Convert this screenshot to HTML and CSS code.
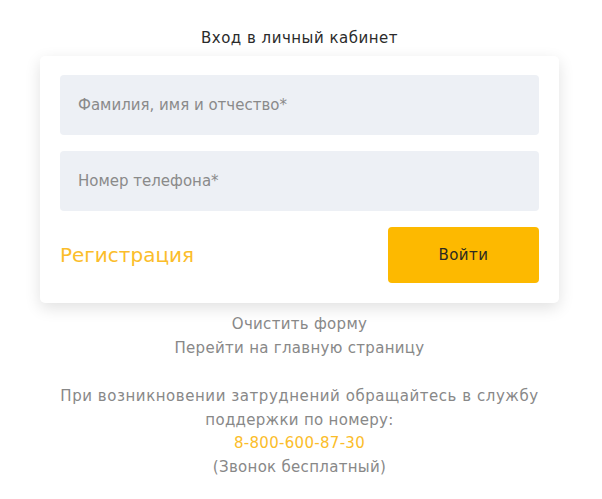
FILE: index.html
```html
<!DOCTYPE html>
<html lang="ru">
<head>
<meta charset="utf-8">
<title>Вход в личный кабинет</title>
<link rel="stylesheet" href="styles.css">
</head>
<body>
<main class="page">
  <h1 class="title">Вход в личный кабинет</h1>
  <form class="card">
    <input class="field" type="text" placeholder="Фамилия, имя и отчество*">
    <input class="field" type="tel" placeholder="Номер телефона*">
    <div class="actions">
      <a class="register" href="#">Регистрация</a>
      <button class="login" type="button">Войти</button>
    </div>
  </form>
  <nav class="links">
    <a href="#">Очистить форму</a>
    <a href="#">Перейти на главную страницу</a>
  </nav>
  <p class="support"><span class="wide">При возникновении затруднений обращайтесь в службу</span><br>поддержки по номеру:<br><a class="phone" href="#">8-800-600-87-30</a><br>(Звонок бесплатный)</p>
</main>
</body>
</html>
```
FILE: styles.css
```css
* { box-sizing: border-box; }
html, body { margin: 0; padding: 0; background: #fff; }
body { font-family: "DejaVu Sans", "Noto Sans", sans-serif; }
.page {
  width: 519px;
  margin: 0 0 0 40px;
  padding-top: 28px;
  display: flex;
  flex-direction: column;
  align-items: stretch;
}
.title {
  margin: 0 0 8px;
  font-size: 15px;
  font-weight: 500;
  letter-spacing: 0.5px;
  line-height: 20px;
  color: #2b2b2b;
  text-align: center;
}
.card {
  background: #fff;
  border-radius: 5px;
  box-shadow: 0 5px 16px rgba(0,0,0,0.12);
  padding: 19px 20px 20px;
  display: flex;
  flex-direction: column;
  gap: 16px;
}
.field {
  height: 60px;
  border: none;
  border-radius: 4px;
  background: #edf0f5;
  padding: 0 18px;
  font: inherit;
  font-size: 15px;
  color: #333;
  outline: none;
}
.field::placeholder { color: #8a8a8a; }
.actions {
  display: flex;
  align-items: center;
  justify-content: space-between;
}
.register {
  color: #fbbd2a;
  font-size: 20px;
  text-decoration: none;
}
.login {
  width: 151px;
  height: 56px;
  border: none;
  border-radius: 4px;
  background: #fdb900;
  font: inherit;
  font-size: 15px;
  letter-spacing: 0.5px;
  font-weight: 500;
  color: #2d2a20;
  cursor: pointer;
}
.links {
  margin-top: 9px;
  display: flex;
  flex-direction: column;
  align-items: center;
}
.links a, .support {
  font-size: 15px;
  letter-spacing: 0.3px;
  line-height: 24px;
  color: #888;
  text-decoration: none;
}
.support {
  margin: 25px 0 0;
  line-height: 23.6px;
  text-align: center;
}
.wide { letter-spacing: 0.55px; }
.phone { color: #fbbd2a; text-decoration: none; }
```
